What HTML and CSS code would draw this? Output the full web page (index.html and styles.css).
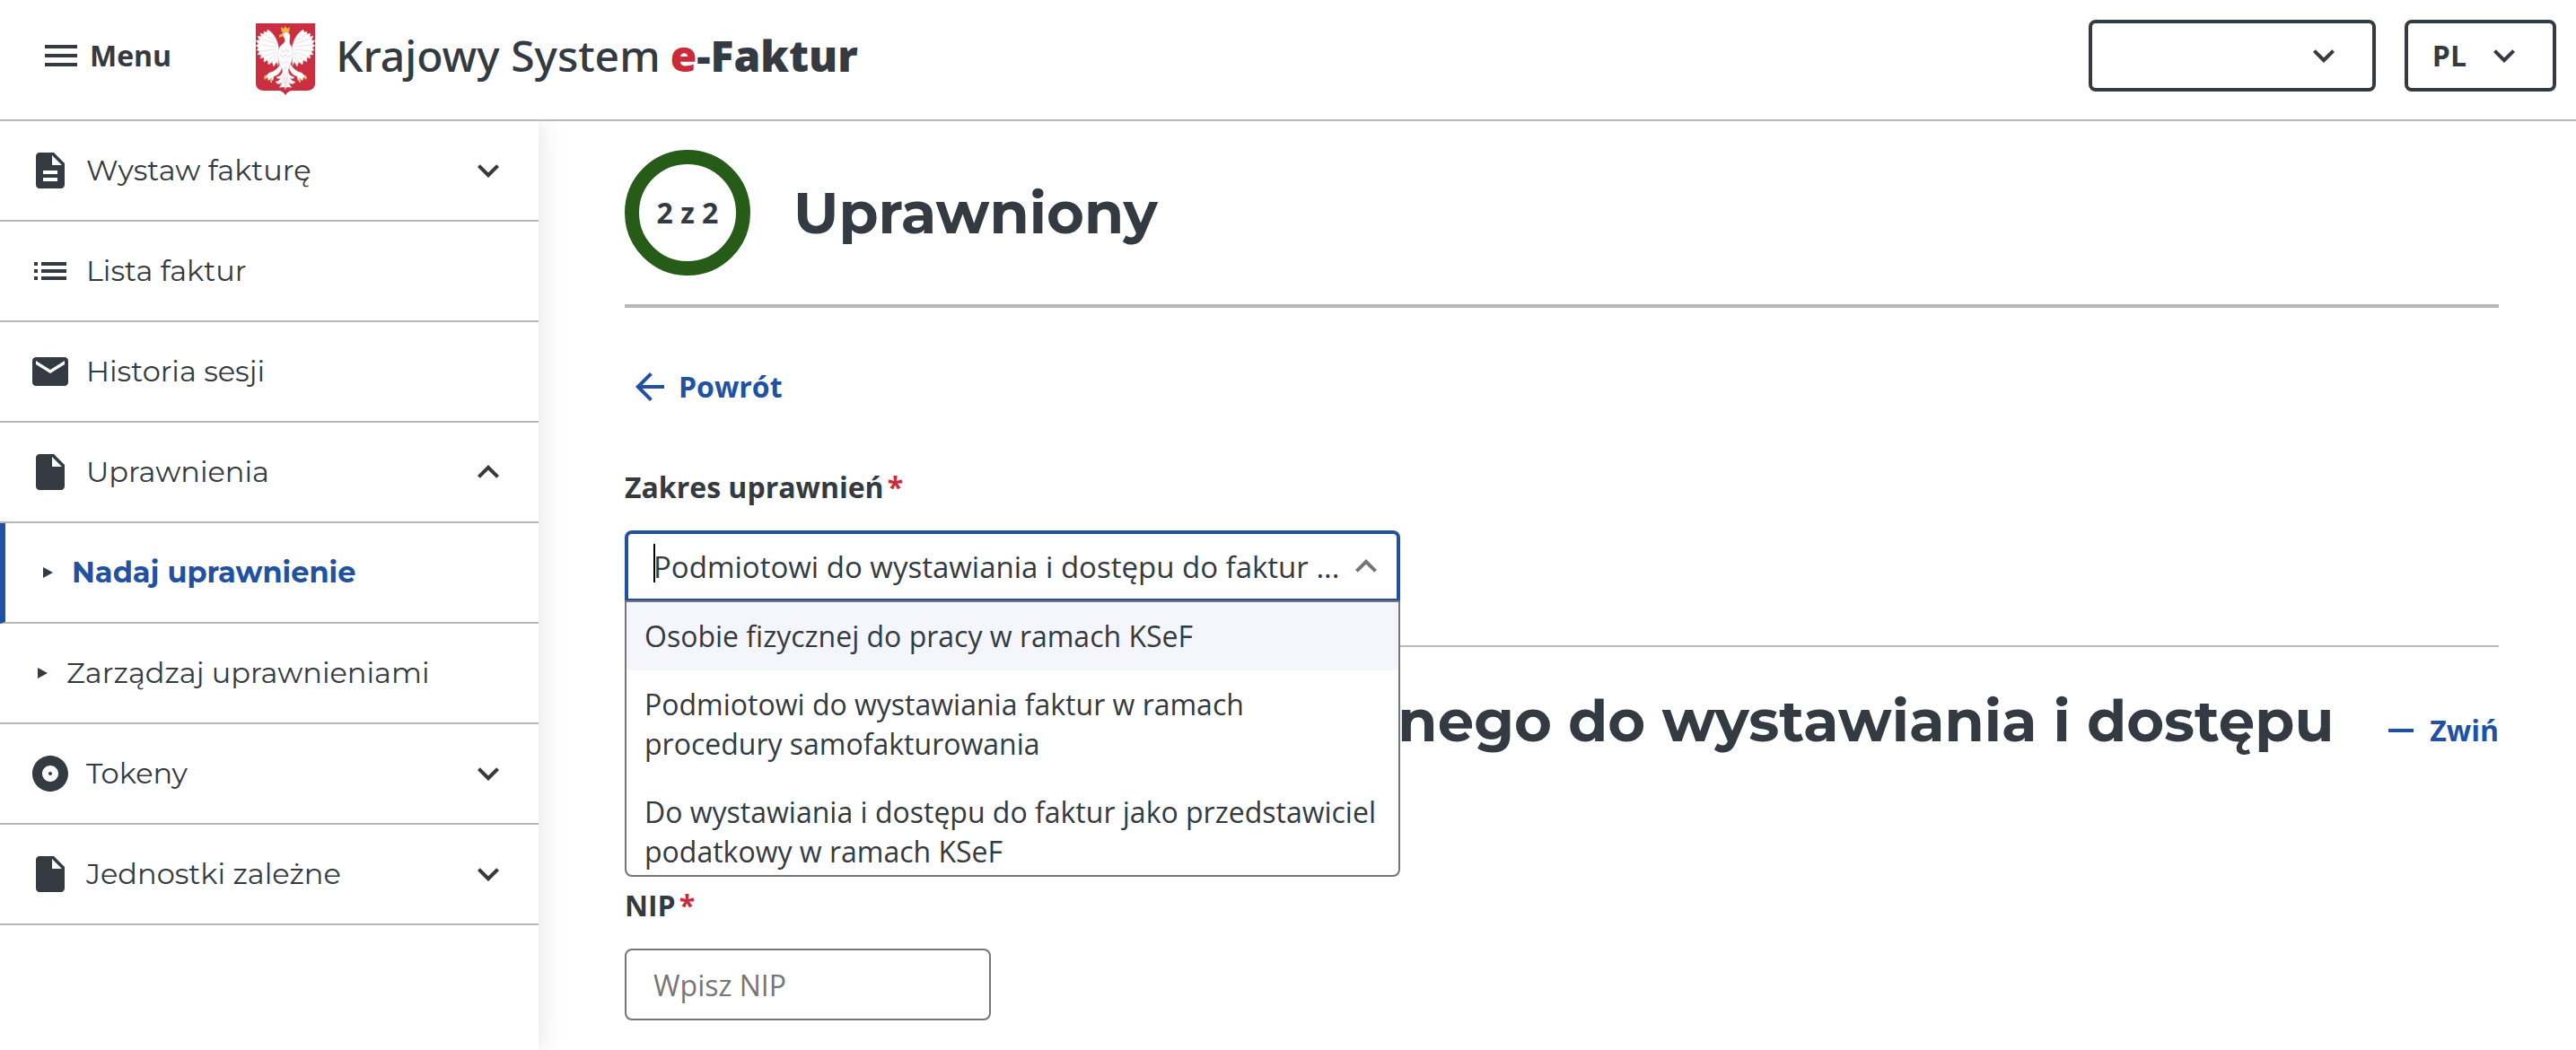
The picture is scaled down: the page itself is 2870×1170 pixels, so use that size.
FILE: index.html
```html
<!DOCTYPE html>
<html lang="pl">
<head>
<meta charset="utf-8">
<meta name="viewport" content="width=device-width, initial-scale=1">
<title>Krajowy System e-Faktur</title>
<link rel="stylesheet" href="styles.css">
</head>
<body>
<svg class="sprite" aria-hidden="true">
  <symbol id="i-menu" viewBox="0 0 24 24"><path d="M3 18h18v-2H3v2zm0-5h18v-2H3v2zm0-7v2h18V6H3z"/></symbol>
  <symbol id="i-down" viewBox="0 0 24 24"><path d="M16.59 8.59 12 13.17 7.41 8.59 6 10l6 6 6-6z"/></symbol>
  <symbol id="i-up" viewBox="0 0 24 24"><path d="m12 8-6 6 1.41 1.41L12 10.83l4.59 4.58L18 14z"/></symbol>
  <symbol id="i-doc" viewBox="0 0 24 24"><path d="M14 2H6c-1.1 0-2 .9-2 2v16c0 1.1.9 2 2 2h12c1.1 0 2-.9 2-2V8l-6-6zm2 16H8v-2h8v2zm0-4H8v-2h8v2zm-3-5V3.5L18.5 9H13z"/></symbol>
  <symbol id="i-file" viewBox="0 0 24 24"><path d="M14 2H6c-1.1 0-2 .9-2 2v16c0 1.1.9 2 2 2h12c1.1 0 2-.9 2-2V8l-6-6zm-1 7V3.5L18.5 9H13z"/></symbol>
  <symbol id="i-list" viewBox="0 0 24 24"><path d="M3 13h2v-2H3v2zm0 4h2v-2H3v2zm0-8h2V7H3v2zm4 4h14v-2H7v2zm0 4h14v-2H7v2zM7 7v2h14V7H7z"/></symbol>
  <symbol id="i-mail" viewBox="0 0 24 24"><path d="M20 4H4c-1.1 0-2 .9-2 2v12c0 1.1.9 2 2 2h16c1.1 0 2-.9 2-2V6c0-1.1-.9-2-2-2zm0 4-8 5-8-5V6l8 5 8-5v2z"/></symbol>
  <symbol id="i-disc" viewBox="0 0 24 24"><path d="M12 2C6.48 2 2 6.48 2 12s4.48 10 10 10 10-4.480 10-10S17.520 2 12 2zm0 14.500c-2.490 0-4.500-2.010-4.500-4.500S9.510 7.500 12 7.500s4.500 2.010 4.500 4.500-2.010 4.500-4.500 4.500zm0-5.500c-.55 0-1 .45-1 1s.45 1 1 1 1-.45 1-1-.45-1-1-1z"/></symbol>
  <symbol id="i-back" viewBox="0 0 24 24"><path d="M20 11H7.830l5.590-5.590L12 4l-8 8 8 8 1.410-1.410L7.830 13H20v-2z"/></symbol>
  <symbol id="i-minus" viewBox="0 0 24 24"><path d="M5 11h14v2H5z"/></symbol>
  <symbol id="i-tri" viewBox="0 0 12 12"><path d="M1 0 12 6 1 12z"/></symbol>
</svg>

<header class="topbar">
  <button class="menu-btn" type="button"><svg class="icon"><use href="#i-menu"/></svg>Menu</button>
  <a class="brand" href="#">
    <svg class="crest" viewBox="0 0 66 80" aria-hidden="true">
      <path fill="#cc2e41" d="M0 0h66v67c0 5-4 8-9 8H42c-5 0-7 2-9 5-2-3-4-5-9-5H9c-5 0-9-3-9-8z"/>
      <g id="wing" fill="#fff" stroke="#d9c5cd" stroke-width=".5">
        <path d="M26 30C25 20 20 10 13 7l-1 3-3-1 0 3-4-1 1 4-4-1 2 5-4 0 3 4-3 2 3 2-2 3 3 1-2 4 4 0-1 4 4-1 0 5 4-2 1 5 4-3 2 5 3-5 2 4z"/>
        <path fill="none" d="M22 20 9 12M23 23 5 17M23 26 4 24M23 29 4 31M23 32 6 38M24 34 9 43M24 37l-9 9M25 40l-5 8"/>
        <path d="M27 46c-3 5-7 8-12 9l-4 4-1 3 3-2 1 4 3-3 2 3 1-5c5-1 8-5 9-10z"/>
        <path d="M30 51c0 6-3 8-7 9 1 2 3 2 5 1-2 3-4 4-6 4 1 3 5 3 7 1-1 3-2 5-3 5 3 1 5-1 7 1V50z"/>
      </g>
      <use href="#wing" transform="matrix(-1 0 0 1 66 0)"/>
      <path fill="#fff" stroke="#d9c5cd" stroke-width=".5" d="M29 12c3-3 9-3 9 2 0 4-1 6 0 9 3 4 4 9 3 14-1 6-3 10-5 15l-3 22-3-22c-3-5-5-9-5-15-1-6 1-11 5-14 3-2 3-5 1-8z"/>
      <path fill="none" stroke="#dccdd4" stroke-width=".7" d="M28 29l3 3 3-3 3 3M27 35l3 3 3-3 3 3 3-3M28 42l3 3 3-3 3 3M31 49l2 2 2-2M33 55v14M30 60v8M36 60v8"/>
      <path fill="#f0b93a" d="m28 4 3 2 2-3 2 3 3-2-1 6h-8zM31 11l-5 2 0 3 5-2zM9 60l2-3 1 4-2 2zM16 62l2 0 0 4-2 0zM57 60l-2-3-1 4 2 2zM50 62l-2 0 0 4 2 0z"/>
    </svg>
    <span class="brand-name">Krajowy System</span><span class="brand-strong"><span class="red">e</span>-Faktur</span>
  </a>
  <div class="tools">
    <button class="tool tool-context" type="button" aria-label="Kontekst"><svg class="icon"><use href="#i-down"/></svg></button>
    <button class="tool" type="button">PL<svg class="icon"><use href="#i-down"/></svg></button>
  </div>
</header>

<div class="layout">
  <nav class="sidebar">
    <a class="item" href="#"><svg class="icon"><use href="#i-doc"/></svg><span>Wystaw fakturę</span><svg class="icon chevron"><use href="#i-down"/></svg></a>
    <a class="item" href="#"><svg class="icon"><use href="#i-list"/></svg><span>Lista faktur</span></a>
    <a class="item" href="#"><svg class="icon"><use href="#i-mail"/></svg><span>Historia sesji</span></a>
    <a class="item" href="#"><svg class="icon"><use href="#i-file"/></svg><span>Uprawnienia</span><svg class="icon chevron"><use href="#i-up"/></svg></a>
    <a class="item sub active" href="#" aria-current="page"><svg class="marker"><use href="#i-tri"/></svg><span>Nadaj uprawnienie</span></a>
    <a class="item sub" href="#"><svg class="marker"><use href="#i-tri"/></svg><span>Zarządzaj uprawnieniami</span></a>
    <a class="item" href="#"><svg class="icon"><use href="#i-disc"/></svg><span>Tokeny</span><svg class="icon chevron"><use href="#i-down"/></svg></a>
    <a class="item" href="#"><svg class="icon"><use href="#i-file"/></svg><span>Jednostki zależne</span><svg class="icon chevron"><use href="#i-down"/></svg></a>
  </nav>

  <main class="content">
    <div class="step">
      <span class="step-ring">2 z 2</span>
      <h1>Uprawniony</h1>
    </div>

    <a class="back" href="#"><svg class="icon"><use href="#i-back"/></svg>Powrót</a>

    <form>
      <div class="field">
        <label for="scope">Zakres uprawnień<span class="req">*</span></label>
        <div class="combo">
          <input id="scope" class="combo-input" type="text" role="combobox" aria-expanded="true" aria-controls="scope-list" value="Podmiotowi do wystawiania i dostępu do faktur ...">
          <span class="caret"></span>
          <svg class="icon combo-arrow"><use href="#i-up"/></svg>
          <ul id="scope-list" class="options" role="listbox">
            <li class="option highlighted" role="option">Osobie fizycznej do pracy w ramach KSeF</li>
            <li class="option" role="option">Podmiotowi do wystawiania faktur w ramach procedury samofakturowania</li>
            <li class="option" role="option">Do wystawiania i dostępu do faktur jako przedstawiciel podatkowy w ramach KSeF</li>
          </ul>
        </div>
      </div>

      <section class="details">
        <div class="details-head">
          <h2>Dane podmiotu uprawnionego do wystawiania i dostępu do faktur</h2>
          <button class="collapse" type="button"><svg class="icon"><use href="#i-minus"/></svg>Zwiń</button>
        </div>
        <div class="field">
          <label for="nip">NIP<span class="req">*</span></label>
          <input id="nip" class="text-input" type="text" placeholder="Wpisz NIP">
        </div>
      </section>
    </form>
  </main>
</div>
</body>
</html>
```
FILE: styles.css
```css
:root {
  --ink: #343a41;
  --blue: #2051a3;
  --red: #cc2a38;
  --grey: #767676;
  --line: #b8b8b8;
  --text: "Open Sans", "Noto Sans", sans-serif;
  --display: Montserrat, Inter, sans-serif;
}

* { box-sizing: border-box; }

body {
  margin: 0;
  min-height: 100vh;
  display: flex;
  flex-direction: column;
  background: #fff;
  color: var(--ink);
  font: 400 32px/44px var(--text);
}

button, input { font: inherit; color: inherit; }
button { background: none; border: 0; padding: 0; cursor: pointer; }
a { color: inherit; text-decoration: none; }
h1, h2 { margin: 0; font: 700 64px/84px var(--display); }

.sprite { display: none; }
.icon { width: 48px; height: 48px; flex: none; fill: currentColor; }

/* Top bar */
.topbar {
  position: relative;
  z-index: 2;
  display: flex;
  align-items: center;
  padding: 18px 22px 27px 44px;
  border-bottom: 2px solid var(--line);
  background: #fff;
}
.menu-btn {
  display: flex;
  align-items: center;
  gap: 8px;
  font-weight: 700;
}
.brand {
  display: flex;
  align-items: center;
  margin-left: 94px;
  font-size: 48px;
  line-height: 64px;
}
.crest { width: 66px; height: 80px; margin: 8px 23px 0 0; }
.brand-name { font-family: "Noto Sans", sans-serif; font-weight: 500; }
.brand-strong { margin-left: 11px; font-weight: 800; }
.red { color: var(--red); }

.tools { display: flex; gap: 32px; margin-left: auto; }
.tool {
  display: flex;
  align-items: center;
  justify-content: flex-end;
  gap: 18px;
  height: 80px;
  padding: 0 30px 0 27px;
  border: 4px solid var(--ink);
  border-radius: 8px;
  font-weight: 700;
}
.tool-context { width: 320px; }

/* Layout */
.layout { flex: 1; display: flex; }

.sidebar {
  position: relative;
  flex: 0 0 600px;
  background: #fff;
  box-shadow: 0 0 28px rgba(0, 0, 0, .12);
  font-family: var(--display);
}
.item {
  display: flex;
  align-items: center;
  gap: 16px;
  height: 112px;
  padding: 0 32px;
  border-bottom: 2px solid var(--line);
}
.chevron { margin-left: auto; }
.sub { gap: 21px; padding-left: 41px; }
.marker { width: 12px; height: 12px; fill: var(--ink); }
.active { border-left: 6px solid var(--blue); font-weight: 700; }
.active span { color: var(--blue); }

.content { flex: 1; padding: 32px 86px 32px 96px; }

/* Step heading */
.step {
  display: flex;
  align-items: center;
  gap: 48px;
  padding-bottom: 32px;
  border-bottom: 4px solid var(--line);
}
.step-ring {
  display: grid;
  place-items: center;
  width: 140px;
  height: 140px;
  border: 16px solid #265c18;
  border-radius: 50%;
  font-weight: 700;
  white-space: nowrap;
}

.back {
  display: flex;
  align-items: center;
  gap: 8px;
  width: max-content;
  margin: 64px 0 66px;
  padding-left: 4px;
  color: var(--blue);
  font-weight: 700;
}

/* Form */
.field label { display: block; margin-bottom: 26px; font-weight: 700; }
.req { margin-left: 4px; color: var(--red); }

.text-input, .combo-input {
  display: block;
  width: 408px;
  height: 80px;
  padding: 0 30px;
  border: 2px solid var(--grey);
  border-radius: 8px;
  background: #fff;
  outline: none;
}
.text-input::placeholder { color: var(--grey); opacity: 1; }

.combo { position: relative; width: 864px; }
.combo-input {
  width: 100%;
  padding: 0 60px 0 28px;
  border: 4px solid var(--blue);
  border-radius: 8px 8px 0 0;
  font-size: 33px;
}
.caret {
  position: absolute;
  left: 32px;
  top: 15px;
  width: 2px;
  height: 43px;
  background: #000;
}
.combo-arrow { position: absolute; right: 14px; top: 16px; color: var(--grey); }
.options {
  position: absolute;
  z-index: 1;
  top: 78px;
  left: 0;
  right: 0;
  height: 308px;
  margin: 0;
  padding: 0;
  overflow: hidden;
  list-style: none;
  border: 2px solid var(--grey);
  border-radius: 0 0 8px 8px;
  background: #fff;
}
.option { padding: 16px 18px 16px 20px; }
.highlighted { background: #f5f6fb; }

.details { margin-top: 48px; padding-top: 40px; border-top: 2px solid var(--line); }
.details-head {
  display: flex;
  align-items: flex-start;
  gap: 40px;
  margin-bottom: 58px;
}
.details-head h2 { flex: 1; }
.collapse {
  display: flex;
  align-items: center;
  gap: 8px;
  margin-top: 29px;
  color: var(--blue);
  font-weight: 700;
}
```
